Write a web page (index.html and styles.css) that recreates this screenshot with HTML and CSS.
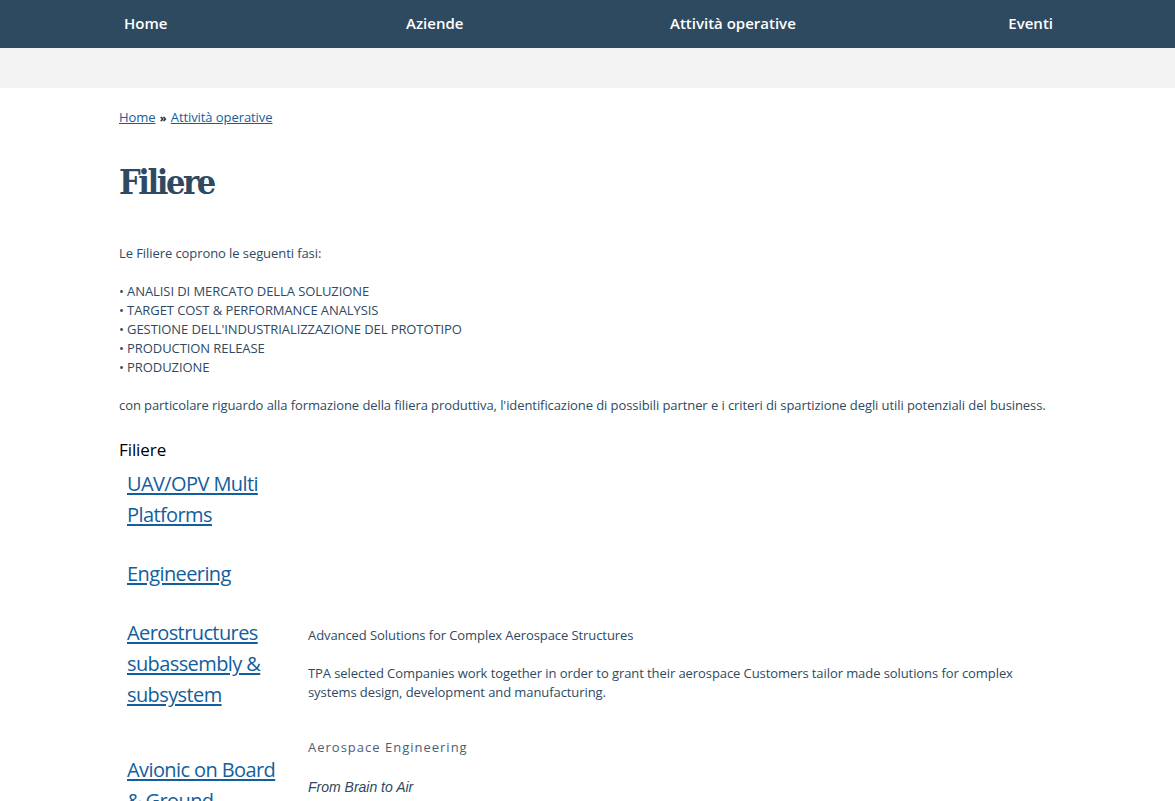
FILE: index.html
```html
<!DOCTYPE html>
<html lang="it">
<head>
    <meta charset="UTF-8">
    <title>Filiere</title>
    <link rel="stylesheet" href="styles.css">
</head>
<body>
    <div class="topbar">
        <ul class="menu">
            <li><a href="#">Home</a></li>
            <li><a href="#">Aziende</a></li>
            <li><a href="#">Attività operative</a></li>
            <li><a href="#">Eventi</a></li>
        </ul>
    </div>
    <div class="subbar"></div>

    <div class="content">
        <div class="breadcrumb">
            <a href="#">Home</a> <span class="sep">»</span> <a href="#">Attività operative</a>
        </div>

        <h1>Filiere</h1>

        <p>Le Filiere coprono le seguenti fasi:</p>
        <p>
            • ANALISI DI MERCATO DELLA SOLUZIONE<br>
            • TARGET COST &amp; PERFORMANCE ANALYSIS<br>
            • GESTIONE DELL'INDUSTRIALIZZAZIONE DEL PROTOTIPO<br>
            • PRODUCTION RELEASE<br>
            • PRODUZIONE
        </p>
        <p>con particolare riguardo alla formazione della filiera produttiva, l'identificazione di possibili partner e i criteri di spartizione degli utili potenziali del business.</p>

        <h3>Filiere</h3>
        <table class="filiere">
            <tr>
                <td class="name"><a href="#">UAV/OPV Multi Platforms</a></td>
                <td class="desc"></td>
            </tr>
            <tr>
                <td class="name"><a href="#">Engineering</a></td>
                <td class="desc"></td>
            </tr>
            <tr>
                <td class="name"><a href="#">Aerostructures subassembly &amp; subsystem</a></td>
                <td class="desc">
                    <p>Advanced Solutions for Complex Aerospace Structures</p>
                    <p>TPA selected Companies work together in order to grant their aerospace Customers tailor made solutions for complex systems design, development and manufacturing.</p>
                </td>
            </tr>
            <tr>
                <td class="name long"><a href="#">Avionic on Board &amp; Ground Equipments</a></td>
                <td class="desc">
                    <p class="tagline">Aerospace Engineering</p>
                    <p class="motto">From Brain to Air</p>
                    <p>More than 200 engineers and technicians working in the avionic field provide to aerospace Customers integrated solutions and services for the whole product life cycle, from the first concept to the flight qualification: design of hardware and software for on board systems, ground stations, test benches and simulators.</p>
                </td>
            </tr>
        </table>
    </div>
</body>
</html>
```

FILE: styles.css
```css
body {
    margin: 0;
    font-family: "Open Sans", Lato, sans-serif;
    font-size: 13px;
    line-height: 19px;
    letter-spacing: -0.08px;
    color: #2e4a62;
    background: #ffffff;
}

.topbar {
    background: #2e4a61;
    height: 48px;
}

.menu {
    list-style: none;
    margin: 0 auto;
    padding: 0 3px 0 5px;
    width: 929px;
    height: 48px;
    display: grid;
    grid-template-columns: 282px 264px 1fr auto;
    align-items: center;
}

.menu a {
    color: #ffffff;
    text-decoration: none;
    font-size: 15px;
    font-weight: 600;
    letter-spacing: 0;
}

.subbar {
    background: #f3f3f3;
    height: 40px;
}

.content {
    width: 937px;
    margin: 0 auto;
    padding-top: 20px;
}

a {
    color: #135e9c;
}

.breadcrumb .sep {
    color: #222;
    font-size: 11px;
    font-weight: bold;
    margin: 0 1px;
}

h1 {
    margin: 33px 0 40px;
    font-family: "DejaVu Serif Condensed", "DejaVu Serif", serif;
    font-weight: bold;
    font-size: 34px;
    line-height: 44px;
    letter-spacing: -2.4px;
    color: #2e4a62;
}

p {
    margin: 0 0 19px;
}

h3 {
    margin: 25px 0 2px;
    font-size: 17px;
    line-height: 20px;
    font-weight: normal;
    color: #000;
}

.filiere {
    border-collapse: collapse;
    width: 100%;
}

.filiere td {
    vertical-align: middle;
    padding: 6px 0 22px;
}

.filiere .name {
    width: 165px;
    padding-left: 8px;
    padding-right: 16px;
}

.filiere .name.long {
    vertical-align: top;
    padding-top: 22px;
}

.filiere .name a {
    font-size: 20px;
    line-height: 31px;
    letter-spacing: -0.6px;
    text-decoration-thickness: 2px;
    text-underline-offset: 2px;
}

.filiere .desc p:last-child {
    margin-bottom: 0;
}

.filiere .tagline {
    margin-bottom: 21px;
    letter-spacing: 1px;
    color: #4d6073;
}

.filiere .motto {
    margin-bottom: 0;
    font-family: "Liberation Sans", Arial, sans-serif;
    font-style: italic;
    font-size: 14px;
    letter-spacing: 0;
}
```
